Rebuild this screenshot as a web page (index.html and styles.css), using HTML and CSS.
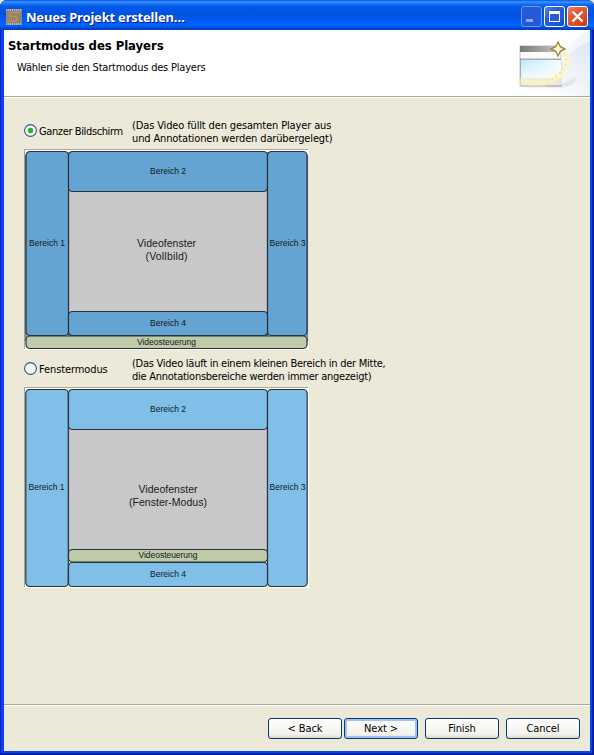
FILE: index.html
```
<!DOCTYPE html>
<html lang="de">
<head>
<meta charset="utf-8">
<title>Neues Projekt erstellen…</title>
<link rel="stylesheet" href="styles.css">
</head>
<body>
<div class="window">
  <div class="titlebar">
    <svg class="appicon" width="16" height="16" viewBox="0 0 16 16">
      <rect width="16" height="16" fill="#858585"/>
      <path d="M0 1H16M0 15H16" stroke="#cfc6ba" stroke-width="1.500" stroke-dasharray="1 1"/>
      <path d="M15 3.500H6Q3.500 3.500 3.500 5.500T6 7.500H9.500Q11.500 7.500 11.500 9.500T9.500 12H1" fill="none" stroke="#ee8b22" stroke-width="1.100"/>
    </svg>
    <h1 class="caption">Neues Projekt erstellen…</h1>
    <div class="controls">
      <span class="ctl ctl-min"><svg width="19" height="19"><rect x="4" y="12" width="7" height="3" fill="#8da9ed"/></svg></span>
      <span class="ctl"><svg width="19" height="19"><path d="M4 4h11v11H4zM5 7v7h9V7z" fill="#fff" fill-rule="evenodd"/></svg></span>
      <span class="ctl ctl-close"><svg width="19" height="19"><path d="M4.500 4.500l10 10M14.500 4.500l-10 10" stroke="#fff" stroke-width="2.300"/></svg></span>
    </div>
  </div>
  <div class="client">
    <header class="banner">
      <div class="banner-text">
        <h2>Startmodus des Players</h2>
        <p>Wählen sie den Startmodus des Players</p>
      </div>
      <svg class="banner-art" width="75" height="66" viewBox="0 0 75 66">
        <defs>
          <linearGradient id="swoosh" x1="0" y1="1" x2="1" y2="0"><stop offset=".2" stop-color="#fff"/><stop offset="1" stop-color="#dde5f8"/></linearGradient>
          <linearGradient id="glow" x1="0" y1="1" x2="1" y2="0"><stop offset=".3" stop-color="#fff"/><stop offset="1" stop-color="#eef2fc"/></linearGradient>
          <linearGradient id="bar"><stop offset="0" stop-color="#777"/><stop offset="1" stop-color="#ccc"/></linearGradient>
          <linearGradient id="pane"><stop offset="0" stop-color="#c2e7fb"/><stop offset="1" stop-color="#f5fbfd"/></linearGradient>
          <linearGradient id="paneFade" x2="0" y2="1"><stop offset="0" stop-color="#fff" stop-opacity="0"/><stop offset="1" stop-color="#fff" stop-opacity=".7"/></linearGradient>
          <filter id="soft" x="-30%" y="-30%" width="160%" height="160%"><feGaussianBlur stdDeviation="1.500"/></filter>
        </defs>
        <path d="M75 0Q44 14 30 66H75z" fill="url(#glow)"/>
        <path d="M75 11Q52 20 42 40Q32 58 14 66H75z" fill="url(#swoosh)"/>
        <path d="M10 54h38l14-7q-3 9-14 10H12z" fill="#c9cbdc" opacity=".6" filter="url(#soft)"/>
        <rect x="5" y="16" width="41" height="40" fill="#fbfbf9" stroke="#c4c4c4"/>
        <rect x="5" y="16" width="42" height="6" fill="url(#bar)"/>
        <path d="M6 29.500h40" stroke="#a5adb5" stroke-width="2"/>
        <rect x="6" y="30" width="40" height="18" fill="url(#pane)"/>
        <rect x="6" y="30" width="40" height="18" fill="url(#paneFade)"/>
        <rect x="6" y="48" width="40" height="7" fill="#e9e7dc"/>
        <path d="M5.500 28v27M6 56h41" stroke="#a7aaaf"/>
        <path d="M49 22Q57 34 46 44Q31 57 4 51" fill="none" stroke="#fdf6c4" stroke-width="6" opacity=".8" filter="url(#soft)"/>
        <path d="M49 24Q54 34 46 42Q39 49 31 52" fill="none" stroke="#f6e6a0" stroke-width="2" stroke-dasharray="2 3"/>
        <path d="M43 12l2.300 4.700L50 19l-4.700 2.300L43 26l-2.300-4.700L36 19l4.700-2.300z" fill="#fffbd9" stroke="#a6853b" stroke-width="1.400"/>
      </svg>
    </header>
    <main class="content">
      <div class="option">
        <svg class="radio" width="13" height="13"><circle cx="6.500" cy="6.500" r="5.900" fill="#fbfbfa" stroke="#295b87" stroke-width="1.100"/><circle cx="6.500" cy="6.500" r="2.700" fill="#27b327"/></svg>
        <span class="label label-full">Ganzer Bildschirm</span>
        <p class="hint"><span class="hint-full">(Das Video füllt den gesamten Player aus<br>und Annotationen werden darübergelegt)</span></p>
      </div>
      <svg class="preview" width="285" height="201" viewBox="0 0 285 201">
        <defs>
          <pattern id="weave" width="2" height="2" patternUnits="userSpaceOnUse"><path d="M0 0h1v1H0zM1 1h1v1H1z" fill="#445" fill-opacity=".09"/></pattern>
        </defs>
        <rect width="285" height="201" fill="#fff"/>
        <path d="M0 .5H284M.5 0V200" stroke="#aca899" fill="none"/>
        <path d="M1.500 6V192M283.500 6V192" stroke="#808386" stroke-width="1.500"/>
        <path d="M42 3h6v5h-6zM241 3h6v5h-6zM2 183h5v7H2zM279 183h4v7h-4z" fill="#aaa"/>
        <g stroke="#26323c" stroke-width="1.200">
          <rect x="44.500" y="8" width="199" height="179" fill="#cfcfcf" stroke="#555"/>
          <g fill="#66a8d7">
            <rect x="2" y="2.500" width="42.500" height="184" rx="4"/>
            <rect x="44.500" y="2.500" width="199" height="40" rx="4"/>
            <rect x="243.500" y="2.500" width="39.500" height="184" rx="4"/>
            <rect x="44.500" y="162.500" width="199" height="24" rx="4"/>
          </g>
          <rect x="2" y="187" width="281" height="12.500" rx="4" fill="#c4d1aa"/>
        </g>
        <rect x="3" y="3" width="280" height="196" fill="url(#weave)"/>
        <g class="small">
          <text x="5" y="97" textLength="36">Bereich 1</text>
          <text x="126" y="25" textLength="36">Bereich 2</text>
          <text x="245.500" y="97" textLength="36">Bereich 3</text>
          <text x="126" y="177" textLength="36">Bereich 4</text>
          <text x="113" y="196" textLength="59">Videosteuerung</text>
        </g>
        <g class="large">
          <text x="113" y="98" textLength="59">Videofenster</text>
          <text x="121.500" y="111" textLength="42">(Vollbild)</text>
        </g>
      </svg>
      <div class="option option-second">
        <svg class="radio" width="13" height="13"><circle cx="6.500" cy="6.500" r="5.900" fill="#f7f7f6" stroke="#295b87" stroke-width="1.100"/></svg>
        <span class="label label-window">Fenstermodus</span>
        <p class="hint"><span class="hint-window">(Das Video läuft in einem kleinen Bereich in der Mitte,<br>die Annotationsbereiche werden immer angezeigt)</span></p>
      </div>
      <svg class="preview" width="285" height="201" viewBox="0 0 285 201">
        <rect width="285" height="201" fill="#fff"/>
        <path d="M0 .5H284M.5 0V200" stroke="#aca899" fill="none"/>
        <g stroke="#26323c" stroke-width="1.200">
          <rect x="44.500" y="8" width="199" height="160" fill="#cfcfcf" stroke="#555"/>
          <g fill="#84c5f0">
            <rect x="1.800" y="2.500" width="42.500" height="197" rx="4"/>
            <rect x="44.500" y="2.500" width="199" height="40" rx="4"/>
            <rect x="243.500" y="2.500" width="39.700" height="197" rx="4"/>
            <rect x="44.500" y="175.500" width="199" height="24" rx="4"/>
          </g>
          <rect x="44.500" y="162.500" width="199" height="12.500" rx="4" fill="#c4d1aa"/>
        </g>
        <rect x="3" y="3" width="280" height="196" fill="url(#weave)"/>
        <g class="small">
          <text x="4.500" y="103" textLength="36">Bereich 1</text>
          <text x="126" y="25" textLength="36">Bereich 2</text>
          <text x="245.500" y="103" textLength="36">Bereich 3</text>
          <text x="126" y="190" textLength="36">Bereich 4</text>
          <text x="114.500" y="171" textLength="59">Videosteuerung</text>
        </g>
        <g class="large">
          <text x="114.500" y="106" textLength="59">Videofenster</text>
          <text x="105" y="119" textLength="78">(Fenster-Modus)</text>
        </g>
      </svg>
    </main>
    <footer class="actions">
      <button class="btn">&lt; Back</button>
      <button class="btn btn-default">Next &gt;</button>
      <button class="btn btn-finish">Finish</button>
      <button class="btn btn-cancel">Cancel</button>
    </footer>
  </div>
</div>
</body>
</html>
```
FILE: styles.css
```
* { box-sizing: border-box; }
body {
  margin: 0;
  background: #ece9d8;
  font: 11px/13px "DejaVu Sans Condensed", "DejaVu Sans", sans-serif;
  font-stretch: condensed;
  letter-spacing: -0.2px;
  color: #000;
}
h1, h2, p { margin: 0; }
svg { display: block; flex: none; }
.window {
  width: 594px;
  height: 755px;
  padding: 0 4px 4px;
  border-radius: 7px 7px 0 0;
  background: #0046e8;
  box-shadow: inset 1px 0 #0019cf, inset -1px -1px #00138c, inset -2px -2px #0028c0;
  overflow: hidden;
}
.titlebar {
  display: flex;
  align-items: center;
  height: 30px;
  margin: 0 -4px;
  padding: 3px 6px 0;
  background: linear-gradient(#0058ee 0, #3f93ff 2px, #1670f5 4px, #0058e6 7px, #0053e0 15px, #0060fc 23px, #0062ff 26px, #0049cf 28px, #0040c0 30px);
}
.caption {
  margin-left: 4px;
  font: bold 13px/18px "Noto Sans", sans-serif;
  letter-spacing: -0.2px;
  color: #fff;
  text-shadow: 1px 1px #0a1883;
  white-space: nowrap;
}
.controls { display: flex; gap: 2px; margin-left: auto; }
.ctl {
  width: 21px;
  height: 21px;
  border: 1px solid #fff;
  border-radius: 3px;
  background: linear-gradient(135deg, #5583f0, #2a5be0 35%, #2256dc 75%, #1746b8);
}
.ctl-min { border-color: #6f95ec; background: #2559d8; }
.ctl-close { background: linear-gradient(135deg, #ea8466, #e15a36 35%, #da4a22 75%, #b93410); }
.client { display: flex; flex-direction: column; height: 721px; background: #ece9d8; }
.banner {
  display: flex;
  justify-content: space-between;
  height: 68px;
  background: #fff;
  border-bottom: 1px solid #fff;
  box-shadow: inset 0 -1px #aca899;
}
.banner-text { padding: 9px 0 0 4px; white-space: nowrap; }
.banner h2 { font-size: 13px; line-height: 14px; letter-spacing: -0.06px; }
.banner p { margin: 8px 0 0 9px; }
.content { flex: 1; padding: 21px 20px 0; }
.option { display: flex; height: 30px; white-space: nowrap; }
.option-second { margin-top: 7px; }
.radio { margin: 5px 2px 0 0; }
.label { width: 93px; padding-top: 6px; }
.label-full { letter-spacing: -0.38px; }
.label-window { letter-spacing: -0.1px; }
.hint-full { letter-spacing: -0.14px; }
.hint-window { letter-spacing: -0.26px; }
.preview { font-family: "Liberation Sans", sans-serif; letter-spacing: 0; }
.small { font-size: 8.5px; fill: #101a22; }
.large { font-size: 10.5px; fill: #1a1a1a; }
.actions {
  display: flex;
  justify-content: flex-end;
  height: 47px;
  padding: 13px 10px 0 0;
  border-top: 1px solid #aca899;
  box-shadow: inset 0 1px #fff;
}
.btn {
  width: 74px;
  height: 21px;
  margin: 0 0 0 2px;
  padding: 0;
  border: 1px solid #003c74;
  border-radius: 3px;
  background: linear-gradient(#fff, #f3f2ec 80%, #dcd8cc);
  font: inherit;
  letter-spacing: -0.1px;
  color: #000;
}
.btn-default { box-shadow: inset 0 0 0 2px #a5bff0; }
.btn-finish, .btn-cancel { margin-left: 7px; }
```
